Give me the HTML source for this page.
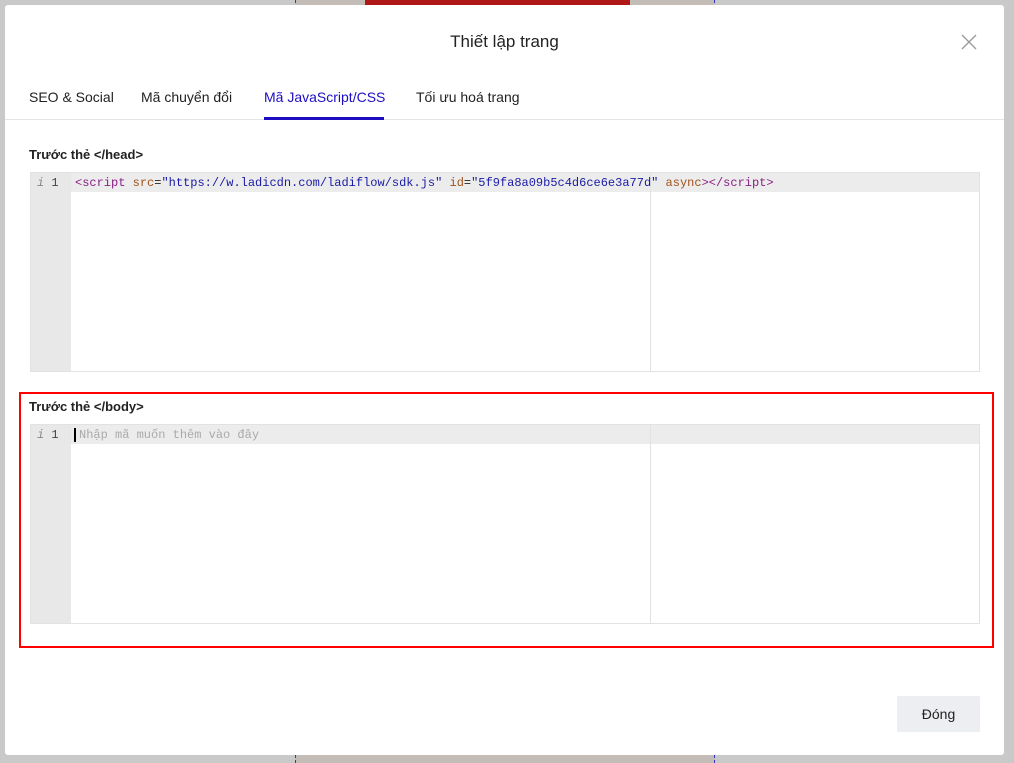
<!DOCTYPE html>
<html><head><meta charset="utf-8"><style>
*{box-sizing:border-box;margin:0;padding:0}
body{width:1014px;height:763px;background:#c9c9c9;position:relative;overflow:hidden;font-family:"Liberation Sans",sans-serif;color:#222}
.bg{position:absolute;left:295px;top:0;width:420px;height:763px;background:#c4bdb7;border-left:1px dashed #33c;border-right:1px dashed #33c}
.red{position:absolute;left:365px;top:0;width:265px;height:6px;background:#b01818}
.modal{position:absolute;left:5px;top:5px;width:999px;height:750px;background:#fff;border-radius:3px}
.title{position:absolute;top:27px;width:100%;text-align:center;font-size:17px;color:#222}
.close{position:absolute;left:955px;top:28px}
.tabs{position:absolute;top:84px;left:24px;font-size:14px}
.tabs span{position:absolute;white-space:nowrap}
.line{position:absolute;left:0;top:114px;width:999px;height:1px;background:#e4e4e4}
.ul{position:absolute;left:259px;top:112px;width:120px;height:3px;background:#1d0ec2}
.lbl{position:absolute;left:24px;font-size:13px;font-weight:bold;color:#222}
.ed{position:absolute;left:25px;width:950px;height:200px;border:1px solid #e2e2e2;background:#fff;font-family:"Liberation Mono",monospace;font-size:12px}
.gut{position:absolute;left:0;top:0;width:40px;height:100%;background:#e8e8e8}
.act{position:absolute;left:40px;top:0;right:0;height:19px;background:#ececec}
.vl{position:absolute;left:619px;top:0;width:1px;height:100%;background:#e2e2e2}
.ln{position:absolute;left:6px;top:3px;color:#444;font-size:12px}
.code{position:absolute;left:44px;top:3px;white-space:nowrap}
.t{color:#8b1f86}.a{color:#a0521d}.s{color:#1a1aa6}
.box{position:absolute;left:14px;top:387px;width:975px;height:256px;border:2px solid #f00}
.btn{position:absolute;left:897px;top:696px;width:83px;height:36px;background:#edeef1;border-radius:2px;text-align:center;line-height:36px;font-size:14px}
</style></head><body>
<div class="bg"></div><div class="red"></div>
<div class="modal">
<div class="title">Thiết lập trang</div>
<svg class="close" width="18" height="18"><path d="M2 2L16 16M16 2L2 16" stroke="#999" stroke-width="1.3"/></svg>
<div class="tabs">
<span style="left:0;top:0">SEO &amp; Social</span>
<span style="left:112px;top:0">Mã chuyển đổi</span>
<span style="left:235px;top:0;color:#1d0ec2">Mã JavaScript/CSS</span>
<span style="left:387px;top:0">Tối ưu hoá trang</span>
</div>
<div class="line"></div><div class="ul"></div>
<div class="lbl" style="top:142px">Trước thẻ &lt;/head&gt;</div>
<div class="ed" style="top:167px"><div class="gut"></div><div class="act"></div><div class="vl"></div>
<div class="ln"><i style="color:#888">i</i> 1</div>
<div class="code"><span class="t">&lt;script</span> <span class="a">src</span>=<span class="s">"https://w.ladicdn.com/ladiflow/sdk.js"</span> <span class="a">id</span>=<span class="s">"5f9fa8a09b5c4d6ce6e3a77d"</span> <span class="a">async</span><span class="t">&gt;&lt;/script&gt;</span></div></div>
<div class="box"></div>
<div class="lbl" style="top:394px">Trước thẻ &lt;/body&gt;</div>
<div class="ed" style="top:419px"><div class="gut"></div><div class="act"></div><div class="vl"></div>
<div class="ln"><i style="color:#888">i</i> 1</div>
<div class="code" style="color:#aaa;border-left:2px solid #000;padding-left:3px;left:43px">Nhập mã muốn thêm vào đây</div></div>
</div>
<div class="btn">Đóng</div>
</body></html>
